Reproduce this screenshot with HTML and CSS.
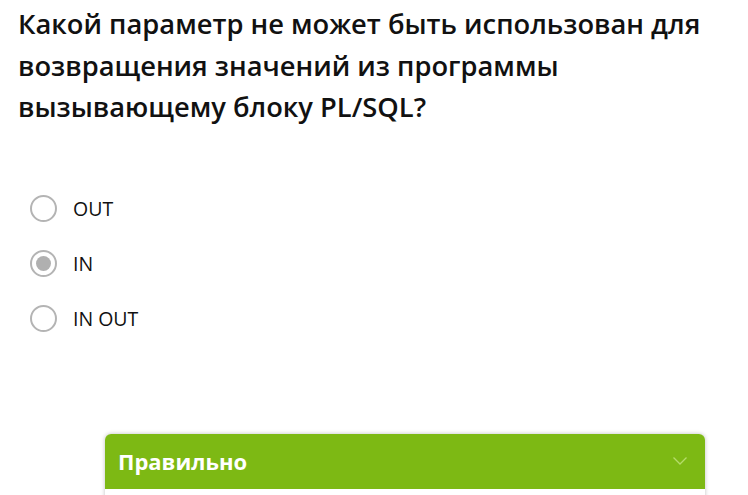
FILE: index.html
```html
<!DOCTYPE html>
<html lang="ru">
<head>
<meta charset="utf-8">
<link rel="stylesheet" href="styles.css">
</head>
<body>
<div class="page">
  <h1 class="question">Какой параметр не может быть использован для возвращения значений из программы вызывающему блоку PL/SQL?</h1>
  <ul class="options">
    <li class="option"><span class="radio"></span><span class="label">OUT</span></li>
    <li class="option"><span class="radio checked"></span><span class="label">IN</span></li>
    <li class="option"><span class="radio"></span><span class="label">IN OUT</span></li>
  </ul>
  <div class="result">
    <div class="result-head">
      <span class="result-title">Правильно</span>
      <svg class="chev" width="16" height="10" viewBox="0 0 16 10"><path d="M1.5 1.5 L8 8 L14.5 1.5" fill="none" stroke="#b5dc6a" stroke-width="1.3"/></svg>
    </div>
    <div class="result-body"></div>
  </div>
</div>
</body>
</html>
```
FILE: styles.css
```css
html, body { margin: 0; padding: 0; background: #fff; }
body { font-family: "Open Sans", "Noto Sans", sans-serif; color: #111; overflow: hidden; }
.page { padding: 3px 30px 0 18px; }
.question {
  margin: 0;
  font-size: 27.3px;
  font-weight: 600;
  line-height: 41.5px;
  color: #111;
  width: 710px;
}
.options { list-style: none; margin: 67px 0 0 0; padding: 0 0 0 12px; display: flex; flex-direction: column; gap: 28px; }
.option { display: flex; align-items: center; gap: 16px; height: 27px; }
.radio {
  width: 27px; height: 27px; box-sizing: border-box;
  border: 2px solid #b4b4b4; border-radius: 50%;
  display: flex; align-items: center; justify-content: center;
  flex: none;
}
.radio.checked::after {
  content: ""; width: 15px; height: 15px; border-radius: 50%; background: #b0b0b0;
}
.label { font-size: 19.5px; color: #111; }
.result {
  margin: 102px 0 0 87px;
  width: 600px;
  border-radius: 6px 6px 0 0;
  box-shadow: 0 0 4px rgba(0,0,0,0.25);
  overflow: hidden;
}
.result-head {
  background: #7db914;
  height: 55px;
  display: flex; align-items: center; justify-content: space-between;
  padding: 0 17px 0 13px;
}
.result-title { color: #fff; font-weight: 700; font-size: 22px; }
.result-body { background: #fff; height: 30px; }
```
